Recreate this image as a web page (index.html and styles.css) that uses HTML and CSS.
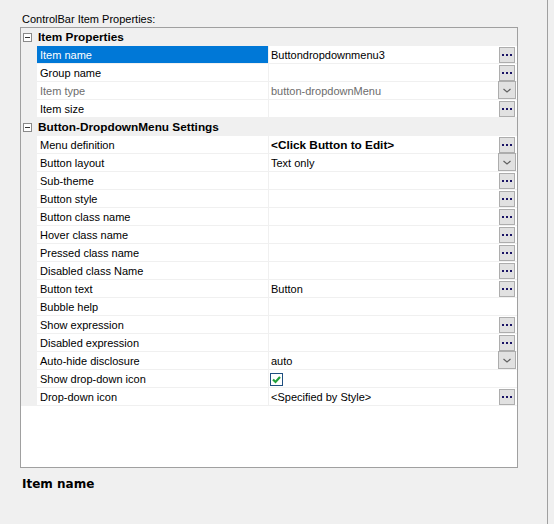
FILE: index.html
```html
<!DOCTYPE html>
<html>
<head>
<meta charset="utf-8">
<link rel="stylesheet" href="styles.css">
</head>
<body>
<div class="app">
  <div class="main">
    <div class="caption">ControlBar Item Properties:</div>
    <div class="panel">
      <div class="cat"><span class="gutter"><span class="toggle"></span></span><span class="cat-name">Item Properties</span></div>
      <div class="row selected"><span class="gutter"></span><span class="name">Item name</span><span class="value">Buttondropdownmenu3</span><span class="act"><span class="ell"><svg width="14" height="14" viewBox="0 0 14 14"><rect x="2" y="6" width="2" height="2"/><rect x="6" y="6" width="2" height="2"/><rect x="10" y="6" width="2" height="2"/></svg></span></span></div>
      <div class="row"><span class="gutter"></span><span class="name">Group name</span><span class="value"></span><span class="act"><span class="ell"><svg width="14" height="14" viewBox="0 0 14 14"><rect x="2" y="6" width="2" height="2"/><rect x="6" y="6" width="2" height="2"/><rect x="10" y="6" width="2" height="2"/></svg></span></span></div>
      <div class="row disabled"><span class="gutter"></span><span class="name">Item type</span><span class="value">button-dropdownMenu</span><span class="act"><span class="drop"><svg width="16" height="16" viewBox="0 0 16 16"><path d="M4.5 7 L8 10 L11.5 7"/></svg></span></span></div>
      <div class="row"><span class="gutter"></span><span class="name">Item size</span><span class="value"></span><span class="act"><span class="ell"><svg width="14" height="14" viewBox="0 0 14 14"><rect x="2" y="6" width="2" height="2"/><rect x="6" y="6" width="2" height="2"/><rect x="10" y="6" width="2" height="2"/></svg></span></span></div>
      <div class="cat"><span class="gutter"><span class="toggle"></span></span><span class="cat-name">Button-DropdownMenu Settings</span></div>
      <div class="row"><span class="gutter"></span><span class="name">Menu definition</span><span class="value bold">&lt;Click Button to Edit&gt;</span><span class="act"><span class="ell"><svg width="14" height="14" viewBox="0 0 14 14"><rect x="2" y="6" width="2" height="2"/><rect x="6" y="6" width="2" height="2"/><rect x="10" y="6" width="2" height="2"/></svg></span></span></div>
      <div class="row"><span class="gutter"></span><span class="name">Button layout</span><span class="value">Text only</span><span class="act"><span class="drop"><svg width="16" height="16" viewBox="0 0 16 16"><path d="M4.5 7 L8 10 L11.5 7"/></svg></span></span></div>
      <div class="row"><span class="gutter"></span><span class="name">Sub-theme</span><span class="value"></span><span class="act"><span class="ell"><svg width="14" height="14" viewBox="0 0 14 14"><rect x="2" y="6" width="2" height="2"/><rect x="6" y="6" width="2" height="2"/><rect x="10" y="6" width="2" height="2"/></svg></span></span></div>
      <div class="row"><span class="gutter"></span><span class="name">Button style</span><span class="value"></span><span class="act"><span class="ell"><svg width="14" height="14" viewBox="0 0 14 14"><rect x="2" y="6" width="2" height="2"/><rect x="6" y="6" width="2" height="2"/><rect x="10" y="6" width="2" height="2"/></svg></span></span></div>
      <div class="row"><span class="gutter"></span><span class="name">Button class name</span><span class="value"></span><span class="act"><span class="ell"><svg width="14" height="14" viewBox="0 0 14 14"><rect x="2" y="6" width="2" height="2"/><rect x="6" y="6" width="2" height="2"/><rect x="10" y="6" width="2" height="2"/></svg></span></span></div>
      <div class="row"><span class="gutter"></span><span class="name">Hover class name</span><span class="value"></span><span class="act"><span class="ell"><svg width="14" height="14" viewBox="0 0 14 14"><rect x="2" y="6" width="2" height="2"/><rect x="6" y="6" width="2" height="2"/><rect x="10" y="6" width="2" height="2"/></svg></span></span></div>
      <div class="row"><span class="gutter"></span><span class="name">Pressed class name</span><span class="value"></span><span class="act"><span class="ell"><svg width="14" height="14" viewBox="0 0 14 14"><rect x="2" y="6" width="2" height="2"/><rect x="6" y="6" width="2" height="2"/><rect x="10" y="6" width="2" height="2"/></svg></span></span></div>
      <div class="row"><span class="gutter"></span><span class="name">Disabled class Name</span><span class="value"></span><span class="act"><span class="ell"><svg width="14" height="14" viewBox="0 0 14 14"><rect x="2" y="6" width="2" height="2"/><rect x="6" y="6" width="2" height="2"/><rect x="10" y="6" width="2" height="2"/></svg></span></span></div>
      <div class="row"><span class="gutter"></span><span class="name">Button text</span><span class="value">Button</span><span class="act"><span class="ell"><svg width="14" height="14" viewBox="0 0 14 14"><rect x="2" y="6" width="2" height="2"/><rect x="6" y="6" width="2" height="2"/><rect x="10" y="6" width="2" height="2"/></svg></span></span></div>
      <div class="row"><span class="gutter"></span><span class="name">Bubble help</span><span class="value"></span><span class="act"></span></div>
      <div class="row"><span class="gutter"></span><span class="name">Show expression</span><span class="value"></span><span class="act"><span class="ell"><svg width="14" height="14" viewBox="0 0 14 14"><rect x="2" y="6" width="2" height="2"/><rect x="6" y="6" width="2" height="2"/><rect x="10" y="6" width="2" height="2"/></svg></span></span></div>
      <div class="row"><span class="gutter"></span><span class="name">Disabled expression</span><span class="value"></span><span class="act"><span class="ell"><svg width="14" height="14" viewBox="0 0 14 14"><rect x="2" y="6" width="2" height="2"/><rect x="6" y="6" width="2" height="2"/><rect x="10" y="6" width="2" height="2"/></svg></span></span></div>
      <div class="row"><span class="gutter"></span><span class="name">Auto-hide disclosure</span><span class="value">auto</span><span class="act"><span class="drop"><svg width="16" height="16" viewBox="0 0 16 16"><path d="M4.5 7 L8 10 L11.5 7"/></svg></span></span></div>
      <div class="row"><span class="gutter"></span><span class="name">Show drop-down icon</span><span class="value"><span class="check"><svg width="11" height="11" viewBox="0 0 11 11"><path d="M2 5.5 L4.5 8 L9 3"/></svg></span></span><span class="act"></span></div>
      <div class="row"><span class="gutter"></span><span class="name">Drop-down icon</span><span class="value">&lt;Specified by Style&gt;</span><span class="act"><span class="ell"><svg width="14" height="14" viewBox="0 0 14 14"><rect x="2" y="6" width="2" height="2"/><rect x="6" y="6" width="2" height="2"/><rect x="10" y="6" width="2" height="2"/></svg></span></span></div>
    </div>
    <div class="desc">Item name</div>
  </div>
</div>
</body>
</html>
```
FILE: styles.css
```css
html, body {
  margin: 0;
  padding: 0;
  background: #f0f0f0;
}
.app {
  width: 554px;
  height: 524px;
  overflow: hidden;
  font-family: "Liberation Sans", Arial, sans-serif;
  font-size: 11px;
  color: #000;
}
.main {
  width: 547px;
  height: 524px;
  border-right: 1px solid #a0a0a0;
  box-sizing: content-box;
}
.caption {
  padding-left: 22px;
  padding-top: 11px;
  line-height: 16px;
  height: 16px;
}
.panel {
  margin-left: 20px;
  width: 496px;
  height: 439px;
  border: 1px solid #a0a0a0;
  background: #fff;
}
.cat, .row {
  display: flex;
  height: 17px;
  border-bottom: 1px solid #f0f0f0;
  line-height: 16px;
}
.cat {
  background: #f0f0f0;
}
.gutter {
  width: 16px;
  flex: none;
  background: #f0f0f0;
  position: relative;
}
.toggle {
  position: absolute;
  left: 2px;
  top: 5px;
  width: 7px;
  height: 7px;
  border: 1px solid #8a8a8a;
  background: #fff;
}
.toggle::after {
  content: "";
  position: absolute;
  left: 1px;
  top: 3px;
  width: 5px;
  height: 1px;
  background: #333;
}
.cat-name {
  font-weight: bold;
  font-size: 11.8px;
  padding-left: 1px;
  padding-top: 1px;
}
.name {
  width: 228px;
  flex: none;
  padding-left: 3px;
  padding-top: 1px;
  border-right: 1px solid #f0f0f0;
  white-space: nowrap;
}
.selected .name {
  background: #0078d7;
  color: #fff;
}
.disabled .name, .disabled .value {
  color: #6d6d6d;
}
.value {
  width: 227px;
  flex: none;
  padding-left: 2px;
  padding-top: 1px;
  white-space: nowrap;
  display: flex;
  align-items: center;
}
.value.bold {
  font-weight: bold;
  font-size: 11.8px;
}
.act {
  width: 18px;
  flex: none;
  position: relative;
  background: #fff;
}
.ell {
  position: absolute;
  left: 1px;
  top: 1px;
  width: 14px;
  height: 14px;
  border: 1px solid #adadad;
  background: #e1e1e1;
}
.ell svg {
  display: block;
  fill: #1a1466;
}
.drop {
  position: absolute;
  left: 0;
  top: -1px;
  width: 16px;
  height: 16px;
  border: 1px solid #adadad;
  background: #e1e1e1;
}
.drop svg {
  display: block;
  fill: none;
  stroke: #606060;
  stroke-width: 1.2;
}
.check {
  width: 11px;
  height: 11px;
  border: 1px solid #1f4f80;
  background: #fff;
  margin-left: -1px;
}
.check svg {
  display: block;
  fill: none;
  stroke: #21a03a;
  stroke-width: 2.2;
}
.desc {
  padding-left: 22px;
  margin-top: 9px;
  font-family: "DejaVu Sans", sans-serif;
  font-weight: bold;
  font-size: 12px;
  line-height: 15px;
}
```
